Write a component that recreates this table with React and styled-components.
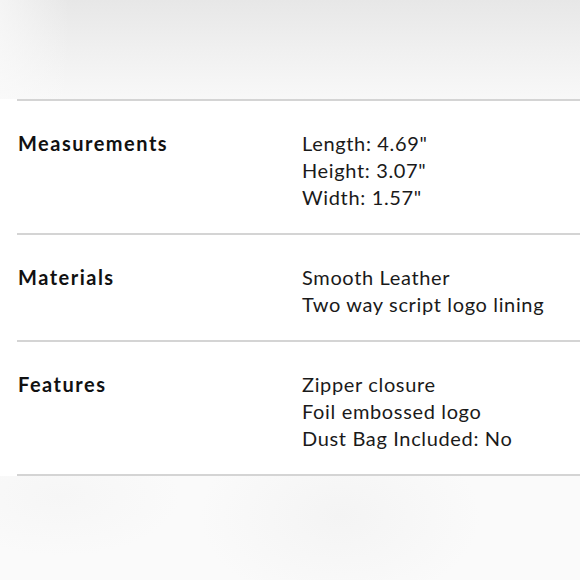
import React from "react";
import styled, { createGlobalStyle } from "styled-components";

const GlobalStyle = createGlobalStyle`
  html, body {
    margin: 0;
    padding: 0;
    background: #fff;
  }
  body {
    font-family: "Lato", "Liberation Sans", sans-serif;
    color: #111;
  }
`;

const Page = styled.div`
  width: 580px;
  height: 580px;
  display: flex;
  flex-direction: column;
  overflow: hidden;
`;

const TopBand = styled.div`
  height: 99px;
  flex-shrink: 0;
  background:
    linear-gradient(90deg, rgba(250, 250, 250, 0.7) 0%, rgba(250, 250, 250, 0) 12%),
    linear-gradient(180deg, #e7e7e7 0%, #f0f0f0 50%, #f8f8f8 100%);
`;

const Sheet = styled.div`
  background: #fff;
  display: flex;
  flex-direction: column;
  padding-left: 17px;
`;

const Row = styled.div`
  display: grid;
  grid-template-columns: 285px 1fr;
  border-top: 2px solid #d4d4d4;
  padding: 29px 0 22px;
  &:last-child {
    border-bottom: 2px solid #d4d4d4;
  }
`;

const Label = styled.div`
  font-weight: 700;
  font-size: 20px;
  line-height: 27px;
  letter-spacing: 1.5px;
  padding-left: 1px;
`;

const Values = styled.div`
  display: flex;
  flex-direction: column;
  font-size: 20px;
  line-height: 27px;
  font-weight: 400;
  letter-spacing: 0.65px;
  color: #1a1a1a;
`;

const BottomBand = styled.div`
  flex: 1;
  background:
    radial-gradient(ellipse 140px 90px at 340px 40px, #f4f4f4 0%, rgba(244, 244, 244, 0) 100%),
    radial-gradient(ellipse 120px 60px at 60px 20px, #f6f6f6 0%, rgba(246, 246, 246, 0) 100%),
    #fafafa;
`;

const specs = [
  { label: "Measurements", values: ['Length: 4.69"', 'Height: 3.07"', 'Width: 1.57"'] },
  { label: "Materials", values: ["Smooth Leather", "Two way script logo lining"] },
  { label: "Features", values: ["Zipper closure", "Foil embossed logo", "Dust Bag Included: No"] },
];

export default function App() {
  return (
    <>
      <GlobalStyle />
      <Page>
        <TopBand />
        <Sheet>
          {specs.map((s) => (
            <Row key={s.label}>
              <Label>{s.label}</Label>
              <Values>
                {s.values.map((v) => (
                  <span key={v}>{v}</span>
                ))}
              </Values>
            </Row>
          ))}
        </Sheet>
        <BottomBand />
      </Page>
    </>
  );
}
